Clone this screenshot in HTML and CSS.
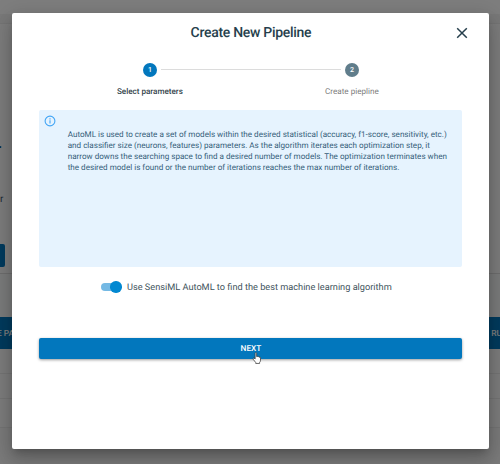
FILE: index.html
```html
<!DOCTYPE html>
<html lang="en">
<head>
<meta charset="utf-8">
<title>Create New Pipeline</title>
<link rel="stylesheet" href="styles.css">
</head>
<body>
<div class="page">
  <div class="page-top"></div>
  <div class="page-gap"></div>
  <div class="page-panel"><span class="dot">.</span><span class="frag">r</span><span class="side-button"></span></div>
  <div class="page-strip"></div>
  <div class="page-bar"><span class="bar-left">E PA</span><span class="bar-right">RU</span></div>
  <div class="row row-a"></div>
  <div class="row row-b"></div>
  <div class="row row-c"></div>
</div>
<div class="backdrop">
  <main class="dialog">
    <header class="dialog-head">
      <h1>Create New Pipeline</h1>
      <svg class="close" viewBox="0 0 12 12"><path d="M1.2 1.2L10.8 10.8M10.8 1.2L1.2 10.8"/></svg>
    </header>
    <div class="stepper">
      <div class="step active"><span class="badge">1</span><span class="step-label">Select parameters</span></div>
      <div class="connector"></div>
      <div class="step"><span class="badge">2</span><span class="step-label">Create piepline</span></div>
    </div>
    <section class="info">
      <svg class="info-icon" viewBox="0 0 12 12"><circle cx="6" cy="6" r="4.9"/><path d="M6 5.3V8.6M6 3.3V4.4"/></svg>
      <p>AutoML is used to create a set of models within the desired statistical (accuracy, f1-score, sensitivity, etc.)<br>and classifier size (neurons, features) parameters. As the algorithm iterates each optimization step, it<br>narrow downs the searching space to find a desired number of models. The optimization terminates when<br>the desired model is found or the number of iterations reaches the max number of iterations.</p>
    </section>
    <label class="toggle"><span class="switch"><span class="knob"></span></span><span class="toggle-text">Use SensiML AutoML to find the best machine learning algorithm</span></label>
    <div class="next">NEXT
      <svg class="cursor" viewBox="0 0 10 13"><path d="M3 7.5V1.6Q3 .6 3.8 .6T4.6 1.6V5Q5.4 4.4 6 5.2Q7 4.6 7.4 5.6Q8.8 5.2 8.8 6.6V8.8Q8.8 10.4 7.8 11.4V12.4H3.6V11.4L.8 7.8Q.5 7 1.2 6.7T3 7.5Z"/></svg>
    </div>
  </main>
</div>
</body>
</html>
```
FILE: styles.css
```css
* { box-sizing: border-box; }
body { margin: 0; width: 500px; height: 464px; overflow: hidden; font-family: Roboto, sans-serif; background: #f6f6f6; text-rendering: geometricPrecision; }
.page { height: 464px; display: flex; flex-direction: column; }
.page-top { height: 14px; background: #fcfcfc; }
.page-gap { height: 10px; background: #f3f3f3; border-bottom: 1px solid #ebebeb; }
.page-panel { height: 250px; background: #fafafa; border-bottom: 1px solid #dcdcdc; display: flex; flex-direction: column; align-items: flex-start; }
.dot { height: 38px; margin-top: 112px; font-size: 14px; line-height: 16px; margin-left: -2px; color: #0a4e84; font-weight: 700; }
.frag { height: 46px; margin-top: 16px; font-size: 10px; line-height: 20px; color: #34516b; }
.side-button { width: 5px; height: 23px; margin-top: 8px; background: #0277bd; border-radius: 0 2px 2px 0; }
.page-strip { height: 43px; background: #f6f8f9; }
.page-bar { height: 32px; background: #0277bd; color: #fff; display: flex; justify-content: space-between; align-items: center; font-size: 8.4px; line-height: 12px; padding-top: 2px; font-weight: 500; overflow: hidden; white-space: nowrap; }
.bar-left { margin-left: -3px; }
.bar-right { margin-right: -2px; }
.row { background: #fbfbfb; border-bottom: 1px solid #ebebeb; }
.row-a, .row-b { height: 25px; }
.row-c { height: 29px; }
.backdrop { position: absolute; inset: 0; background: rgba(0, 0, 0, .5); padding: 12.7px 0 0 12.4px; }
.dialog { height: 436.6px; width: 477px; background: #fff; border-radius: 2px; padding: 0 27px; box-shadow: 0 5px 7px -3px rgba(0,0,0,.2), 0 12px 18px 1px rgba(0,0,0,.14), 0 4px 22px 4px rgba(0,0,0,.12); }
.dialog-head { height: 50px; display: grid; grid-template-columns: 1fr; justify-items: center; }
h1 { grid-area: 1 / 1; margin: 11.3px 0 0; font-size: 14px; letter-spacing: -.3px; line-height: 18px; font-weight: 500; color: #263f4c; white-space: nowrap; }
.close { grid-area: 1 / 1; justify-self: end; width: 12px; height: 12px; margin: 14px -6px 0 0; fill: none; stroke: #263f4c; stroke-width: 1.5; }
.stepper { display: grid; grid-template-columns: 14px 188px 14px; justify-content: center; height: 47.5px; }
.step { display: flex; flex-direction: column; align-items: center; width: 14px; color: #7c7c7c; white-space: nowrap; }
.badge { width: 14px; height: 14px; flex: none; border-radius: 50%; background: #607d8b; color: #fff; font-size: 7px; line-height: 14px; text-align: center; font-weight: 500; }
.step-label { margin-top: 8.7px; font-size: 8.1px; line-height: 12px; }
.active { color: #34444c; font-weight: 500; }
.active .badge { background: #0277bd; }
.connector { height: 1px; margin-top: 6px; width: 180px; background: #dcdcdc; justify-self: center; }
.info { display: flex; height: 157px; padding: 4.5px 0 0 4.5px; background: #e6f3fe; border-radius: 2px; }
.info-icon { width: 12px; height: 12px; flex: none; fill: none; stroke: #42a5f5; stroke-width: 1.1; }
.info p { margin: 13.9px 0 0 11.8px; font-size: 8.11px; line-height: 11.2px; color: #345d79; white-space: nowrap; }
.toggle { display: flex; align-items: center; height: 18px; margin: 11px 0 0 61.6px; }
.switch { width: 20px; height: 8px; border-radius: 4px; background: #74b9e4; display: flex; align-items: center; }
.knob { width: 11.5px; height: 11.5px; flex: none; margin-left: 9.5px; border-radius: 50%; background: #0288d1; }
.toggle-text { margin-left: 6px; font-size: 9.2px; color: #42545d; white-space: nowrap; }
.next { position: relative; height: 21px; margin-top: 42px; border-radius: 2px; background: #0277bd; color: #fff; font-size: 8.2px; font-weight: 500; line-height: 22px; text-align: center; box-shadow: 0 1px 3px rgba(0,0,0,.4); }
.cursor { position: absolute; left: 213px; top: 14px; width: 10px; height: 12px; fill: #fff; stroke: #333; stroke-width: .8; }
```
